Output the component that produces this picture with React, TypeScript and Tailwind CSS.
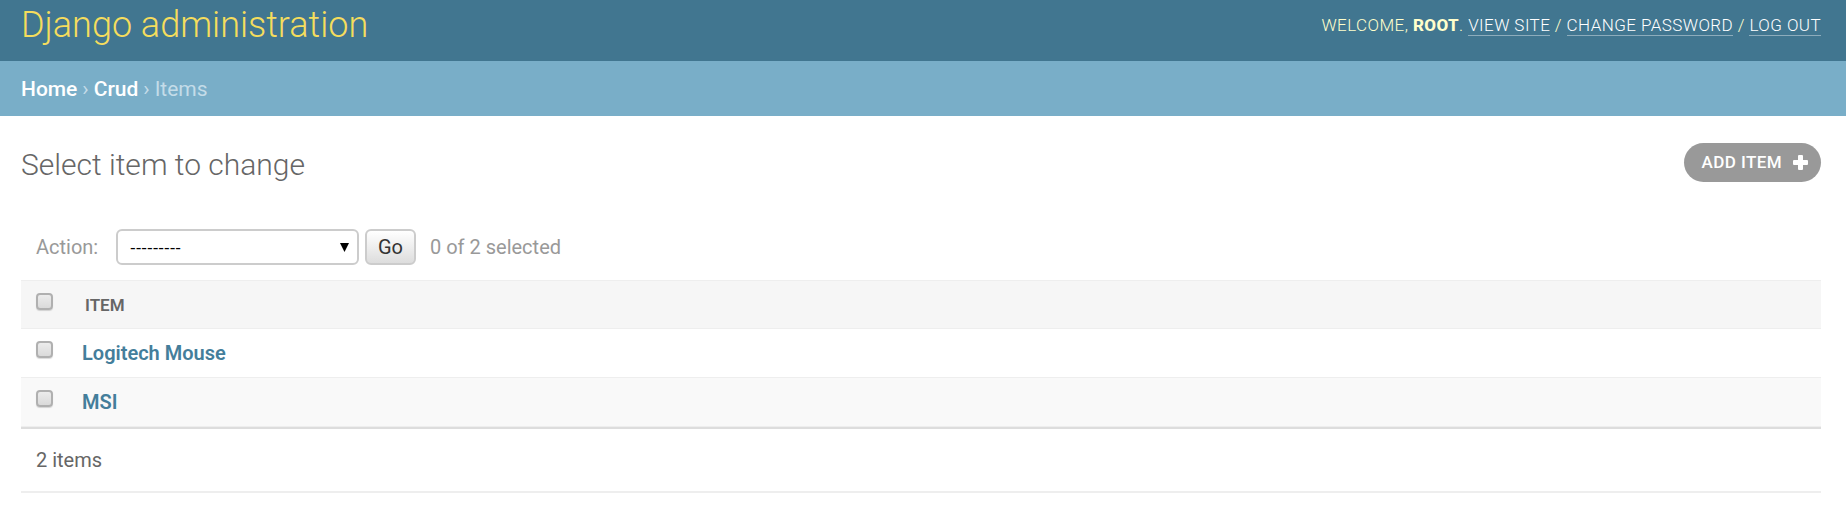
import React from "react";

const items: string[] = ["Logitech Mouse", "MSI"];

const toolLink = "border-b border-white/40 text-white";
const checkbox =
  "block size-[17px] appearance-none rounded-[4px] border-2 border-[#b0b0b0] bg-linear-to-b from-[#ececec] to-[#dadada] shadow-[0_1px_1px_rgba(0,0,0,0.15)] checked:bg-[#417690]";

function Header() {
  return (
    <header className="flex h-[61px] items-start justify-between bg-[#417690] pr-[25px] pl-[21px] text-[#ffc]">
      <h1 className="mt-1 text-[36px] leading-[42px] font-light text-[#f5dd5d]">
        <a href="#">Django administration</a>
      </h1>
      <div className="mt-[15px] text-[17px] leading-5 font-light tracking-wide uppercase">
        Welcome, <strong className="font-extrabold">root</strong>.{" "}
        <a href="#site" className={toolLink}>View site</a> /{" "}
        <a href="#password" className={toolLink}>Change password</a> /{" "}
        <a href="#logout" className={toolLink}>Log out</a>
      </div>
    </header>
  );
}

function Breadcrumbs() {
  return (
    <nav className="flex h-[55px] items-center gap-[5px] bg-[#79aec8] px-[21px] pt-[2px] text-[21px] text-[#c4dce8]">
      <a href="#home" className="font-medium text-white">Home</a>
      <span>›</span>
      <a href="#crud" className="font-medium text-white">Crud</a>
      <span>›</span>
      <span>Items</span>
    </nav>
  );
}

function Actions() {
  return (
    <form className="flex items-center pl-[15px] text-[20px] leading-6 text-[#999]">
      <label htmlFor="action" className="w-20">Action:</label>
      <div className="relative">
        <select
          id="action"
          className="block h-9 w-[243px] appearance-none rounded-md border-2 border-[#ccc] bg-white px-3 pt-[2px] font-['Liberation_Sans',sans-serif] text-[17px] leading-6 text-black"
        >
          <option>---------</option>
          <option>Delete selected items</option>
        </select>
        <svg className="pointer-events-none absolute top-[14px] right-[10px]" width="9" height="9" viewBox="0 0 9 9">
          <path d="M0 0H9L4.5 9Z" fill="#000" />
        </svg>
      </div>
      <button
        type="button"
        className="ml-[6px] h-9 w-[51px] rounded-md border-2 border-[#ccc] bg-linear-to-b from-white to-[#ddd] text-[#333]"
      >
        Go
      </button>
      <span className="ml-[14px]">0 of 2 selected</span>
    </form>
  );
}

export default function App() {
  return (
    <div className="min-h-screen bg-white font-[Roboto,sans-serif] text-[#666]">
      <Header />
      <Breadcrumbs />
      <main className="pt-[27px] pr-[25px] pl-[21px]">
        <div className="flex items-start justify-between">
          <h2 className="mt-1 text-[30px] leading-9 font-light">Select item to change</h2>
          <a
            href="#add"
            className="flex h-[39px] items-center gap-[11px] rounded-full bg-[#999] pr-[13px] pl-[18px] text-[17px] font-medium tracking-wide text-white uppercase"
          >
            Add item
            <svg width="15" height="15" viewBox="0 0 15 15" fill="#fff" aria-hidden="true">
              <rect x="5" y="0" width="5" height="15" rx="1" />
              <rect x="0" y="5" width="15" height="5" rx="1" />
            </svg>
          </a>
        </div>
        <div className="mt-[46px]">
          <Actions />
        </div>
        <table className="mt-[15px] w-full border-collapse text-left">
          <thead>
            <tr className="h-12 border-t border-b border-[#eee] bg-[#f6f6f6]">
              <th className="w-[61px] pt-3 pl-[15px] align-top">
                <input type="checkbox" aria-label="Select all items" className={checkbox} />
              </th>
              <th className="pl-[3px] text-[17px] leading-5 font-semibold uppercase">Item</th>
            </tr>
          </thead>
          <tbody>
            {items.map((name) => (
              <tr key={name} className="h-[49px] border-b border-[#eee] even:bg-[#f9f9f9]">
                <td className="pt-3 pl-[15px] align-top">
                  <input type="checkbox" aria-label={"Select " + name} className={checkbox} />
                </td>
                <th className="text-[20px] font-semibold text-[#447e9b]">
                  <a href="#item">{name}</a>
                </th>
              </tr>
            ))}
          </tbody>
        </table>
        <p className="flex h-[66px] items-center border-t-2 border-b-2 border-t-[#ddd] border-b-[#eee] pl-[15px] text-[20px]">
          2 items
        </p>
      </main>
    </div>
  );
}
